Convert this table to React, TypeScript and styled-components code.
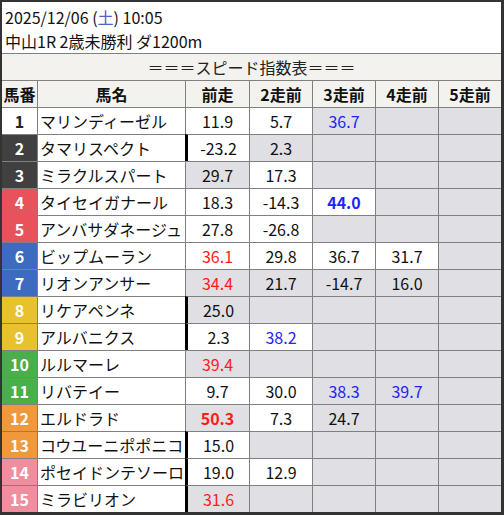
import React from 'react';
import styled, { createGlobalStyle } from 'styled-components';

const GlobalStyle = createGlobalStyle`
  body {
    margin: 0;
    background: #ffffff;
    font-family: "Noto Sans CJK JP", "Noto Sans", sans-serif;
  }
`;

const Frame = styled.div`
  width: 504px;
  height: 515px;
  box-sizing: border-box;
  border-style: solid;
  border-color: #333333;
  border-width: 2px 3px 3px 2px;
  background: #ffffff;
  display: flex;
  flex-direction: column;
`;

const Title = styled.div`
  height: 51px;
  box-sizing: border-box;
  padding: 3px 0 0 3px;
  font-size: 16px;
  line-height: 24px;
  color: #111111;
`;

const Sat = styled.span`
  color: #4a63c4;
`;

const Band = styled.div`
  height: 27px;
  box-sizing: border-box;
  border-top: 1px solid #808080;
  background: #f3f2ef;
  display: flex;
  align-items: center;
  justify-content: center;
  font-size: 16px;
  color: #222222;
`;

const Grid = styled.div`
  display: grid;
  grid-template-columns: 35px 148px 64px 63px 63px 63px 63px;
  grid-auto-rows: 27px;
`;

const Cell = styled.div<{ $bg?: string; $first?: boolean; $thick?: boolean }>`
  box-sizing: border-box;
  border-top: 1px solid #808080;
  border-left: ${(p) => (p.$first ? 'none' : p.$thick ? '3px solid #000000' : '1px solid #808080')};
  background: ${(p) => p.$bg || '#ffffff'};
  display: flex;
  align-items: center;
  justify-content: center;
  font-size: 16px;
  line-height: 1;
  white-space: nowrap;
  overflow: hidden;
`;

const HeadCell = styled(Cell)`
  background: #f3f2ef;
  font-weight: bold;
  color: #111111;
`;

const NumCell = styled(Cell)<{ $fg: string }>`
  color: ${(p) => p.$fg};
  font-weight: bold;
`;

const NameCell = styled(Cell)`
  justify-content: flex-start;
  padding-left: 2px;
  color: #111111;
`;

const Value = styled.span<{ $tone?: 'red' | 'blue'; $bold?: boolean }>`
  color: ${(p) => (p.$tone === 'red' ? '#ff1a1a' : p.$tone === 'blue' ? '#2323f5' : '#111111')};
  font-weight: ${(p) => (p.$bold ? 'bold' : 'normal')};
`;

const GRAY = '#dfdfe4';

const waku: Record<number, [string, string]> = {
  1: ['#ffffff', '#222222'],
  2: ['#404040', '#ffffff'],
  3: ['#404040', '#ffffff'],
  4: ['#e8525a', '#ffffff'],
  5: ['#e8525a', '#ffffff'],
  6: ['#3d6bbf', '#ffffff'],
  7: ['#3d6bbf', '#ffffff'],
  8: ['#e8c22e', '#ffffff'],
  9: ['#e8c22e', '#ffffff'],
  10: ['#4aae4a', '#ffffff'],
  11: ['#4aae4a', '#ffffff'],
  12: ['#f0983c', '#ffffff'],
  13: ['#f0983c', '#ffffff'],
  14: ['#f08ea0', '#ffffff'],
  15: ['#f08ea0', '#ffffff'],
};

type Run = { v?: string; g?: boolean; t?: 'red' | 'blue'; b?: boolean };
type Horse = { no: number; name: string; thick?: boolean; runs: Run[] };

const horses: Horse[] = [
  { no: 1, name: 'マリンディーゼル', runs: [{ v: '11.9' }, { v: '5.7' }, { v: '36.7', g: true, t: 'blue' }, { g: true }, { g: true }] },
  { no: 2, name: 'タマリスペクト', thick: true, runs: [{ v: '-23.2' }, { v: '2.3', g: true }, { g: true }, { g: true }, { g: true }] },
  { no: 3, name: 'ミラクルスパート', runs: [{ v: '29.7', g: true }, { v: '17.3' }, { g: true }, { g: true }, { g: true }] },
  { no: 4, name: 'タイセイガナール', runs: [{ v: '18.3' }, { v: '-14.3' }, { v: '44.0', t: 'blue', b: true }, { g: true }, { g: true }] },
  { no: 5, name: 'アンバサダネージュ', runs: [{ v: '27.8' }, { v: '-26.8' }, { g: true }, { g: true }, { g: true }] },
  { no: 6, name: 'ビップムーラン', runs: [{ v: '36.1', t: 'red' }, { v: '29.8' }, { v: '36.7' }, { v: '31.7' }, { g: true }] },
  { no: 7, name: 'リオンアンサー', runs: [{ v: '34.4', g: true, t: 'red' }, { v: '21.7', g: true }, { v: '-14.7', g: true }, { v: '16.0', g: true }, { g: true }] },
  { no: 8, name: 'リケアペンネ', thick: true, runs: [{ v: '25.0', g: true }, { g: true }, { g: true }, { g: true }, { g: true }] },
  { no: 9, name: 'アルバニクス', thick: true, runs: [{ v: '2.3' }, { v: '38.2', t: 'blue' }, { g: true }, { g: true }, { g: true }] },
  { no: 10, name: 'ルルマーレ', runs: [{ v: '39.4', g: true, t: 'red' }, { g: true }, { g: true }, { g: true }, { g: true }] },
  { no: 11, name: 'リバテイー', runs: [{ v: '9.7' }, { v: '30.0' }, { v: '38.3', g: true, t: 'blue' }, { v: '39.7', g: true, t: 'blue' }, { g: true }] },
  { no: 12, name: 'エルドラド', runs: [{ v: '50.3', g: true, t: 'red', b: true }, { v: '7.3' }, { v: '24.7', g: true }, { g: true }, { g: true }] },
  { no: 13, name: 'コウユーニポポニコ', thick: true, runs: [{ v: '15.0' }, { g: true }, { g: true }, { g: true }, { g: true }] },
  { no: 14, name: 'ポセイドンテソーロ', thick: true, runs: [{ v: '19.0' }, { v: '12.9' }, { g: true }, { g: true }, { g: true }] },
  { no: 15, name: 'ミラビリオン', thick: true, runs: [{ v: '31.6', g: true, t: 'red' }, { g: true }, { g: true }, { g: true }, { g: true }] },
];

const heads = ['馬番', '馬名', '前走', '2走前', '3走前', '4走前', '5走前'];

export default function App() {
  return (
    <>
      <GlobalStyle />
      <Frame>
        <Title>
          <div>
            2025/12/06 (<Sat>土</Sat>) 10:05
          </div>
          <div>中山1R 2歳未勝利 ダ1200m</div>
        </Title>
        <Band>＝＝＝スピード指数表＝＝＝</Band>
        <Grid>
          {heads.map((h, i) => (
            <HeadCell key={h} $first={i === 0}>
              {h}
            </HeadCell>
          ))}
          {horses.map((h) => (
            <React.Fragment key={h.no}>
              <NumCell $first $bg={waku[h.no][0]} $fg={waku[h.no][1]}>
                {h.no}
              </NumCell>
              <NameCell>{h.name}</NameCell>
              {h.runs.map((r, i) => (
                <Cell key={i} $bg={r.g ? GRAY : '#ffffff'} $thick={i === 0 && h.thick}>
                  {r.v && (
                    <Value $tone={r.t} $bold={r.b}>
                      {r.v}
                    </Value>
                  )}
                </Cell>
              ))}
            </React.Fragment>
          ))}
        </Grid>
      </Frame>
    </>
  );
}
